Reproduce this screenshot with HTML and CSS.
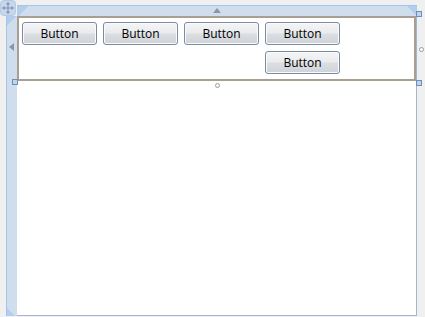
FILE: index.html
```html
<!DOCTYPE html>
<html>
<head>
<meta charset="utf-8">
<link rel="stylesheet" href="styles.css">
</head>
<body>
<div class="designer">
  <div class="corner">
    <svg class="move" width="16" height="16" viewBox="0 0 16 16">
      <rect x="0.5" y="0.5" width="15" height="15" rx="3" fill="#c6d6ec" stroke="#b4c8e2"/>
      <g stroke="#7d8fa8" stroke-width="1" fill="none">
        <line x1="8" y1="3" x2="8" y2="13"/>
        <line x1="3" y1="8" x2="13" y2="8"/>
      </g>
      <g fill="#7d8fa8">
        <polygon points="8,2 6,4.5 10,4.5"/>
        <polygon points="8,14 6,11.5 10,11.5"/>
        <polygon points="2,8 4.5,6 4.5,10"/>
        <polygon points="14,8 11.5,6 11.5,10"/>
      </g>
    </svg>
  </div>
  <div class="ruler-top"><span class="arrow-up"></span></div>
  <div class="ruler-left"><span class="arrow-left"></span></div>
  <div class="canvas">
    <div class="wrap">
      <button class="btn">Button</button>
      <button class="btn">Button</button>
      <button class="btn">Button</button>
      <button class="btn">Button</button>
      <button class="btn btn-last">Button</button>
    </div>
    <span class="handle h-tr"></span>
    <span class="handle h-bl"></span>
    <span class="handle h-br"></span>
    <span class="dot d-right"></span>
    <span class="dot d-bottom"></span>
  </div>
</div>
</body>
</html>
```

FILE: styles.css
```css
html, body {
  margin: 0;
  padding: 0;
  background: #f0f0f0;
  width: 425px;
  height: 317px;
  overflow: hidden;
  font-family: "Open Sans", "Liberation Sans", sans-serif;
}
.designer {
  display: grid;
  grid-template-columns: 17px 400px;
  grid-template-rows: 16px 300px;
}
.corner {
  position: relative;
}
.move {
  display: block;
  position: absolute;
  left: 0;
  top: 0;
}
.ruler-top {
  margin-top: 5px;
  height: 10px;
  background: linear-gradient(135deg, #b3cdec 0, #b3cdec 8px, #cfdded 8px);
  border-top: 1px solid #a3c4ec;
  position: relative;
  display: flex;
  justify-content: center;
  align-items: center;
}
.ruler-top::after {
  content: "";
  position: absolute;
  right: 0;
  top: 0;
  width: 0;
  height: 0;
  border-top: 10px solid #b3cdec;
  border-left: 10px solid transparent;
}
.arrow-up {
  width: 0;
  height: 0;
  border-left: 4px solid transparent;
  border-right: 4px solid transparent;
  border-bottom: 5px solid #8c96a4;
  margin-left: -1px;
  margin-top: -2px;
}
.ruler-left {
  margin-left: 6px;
  width: 10px;
  background: linear-gradient(135deg, #b3cdec 0, #b3cdec 7px, #cfdded 7px);
  border-left: 1px solid #a3c4ec;
  position: relative;
}
.ruler-left::after {
  content: "";
  position: absolute;
  left: 0;
  bottom: 0;
  width: 0;
  height: 0;
  border-bottom: 8px solid #b3cdec;
  border-right: 8px solid transparent;
}
.arrow-left {
  position: absolute;
  left: 2px;
  top: 27px;
  width: 0;
  height: 0;
  border-top: 4px solid transparent;
  border-bottom: 4px solid transparent;
  border-right: 5px solid #8c96a4;
}
.canvas {
  background: #fff;
  border-right: 1px solid #a4b6cf;
  border-bottom: 1px solid #a4b6cf;
  position: relative;
  box-sizing: border-box;
}
.wrap {
  border: 2px solid #a99e92;
  height: 65px;
  box-sizing: border-box;
  display: grid;
  grid-template-columns: repeat(4, 81px);
  align-content: start;
  padding-top: 1px;
}
.btn {
  width: 75px;
  height: 23px;
  margin: 3px;
  padding: 0;
  box-sizing: border-box;
  border: 1px solid #7d8ba0;
  border-radius: 3px;
  background: linear-gradient(#f4f5f6 0, #eaebed 48%, #dbdee2 52%, #cfd3d8 100%);
  box-shadow: inset 0 0 0 1px #fbfbfc;
  font-family: "Open Sans", "Liberation Sans", sans-serif;
  font-size: 12px;
  color: #000;
  line-height: 20px;
}
.btn-last {
  grid-column: 4;
}
.handle {
  position: absolute;
  width: 4px;
  height: 4px;
  border: 1px solid #6b8fbc;
  background: #c3d4ea;
}
.h-tr { left: 399px; top: -5px; }
.h-bl { left: -5px; top: 63px; }
.h-br { left: 399px; top: 64px; }
.dot {
  position: absolute;
  width: 3px;
  height: 3px;
  border: 1px solid #9a9a9a;
  border-radius: 50%;
  background: #fff;
}
.d-right { left: 402px; top: 31px; }
.d-bottom { left: 198px; top: 67px; }
```
